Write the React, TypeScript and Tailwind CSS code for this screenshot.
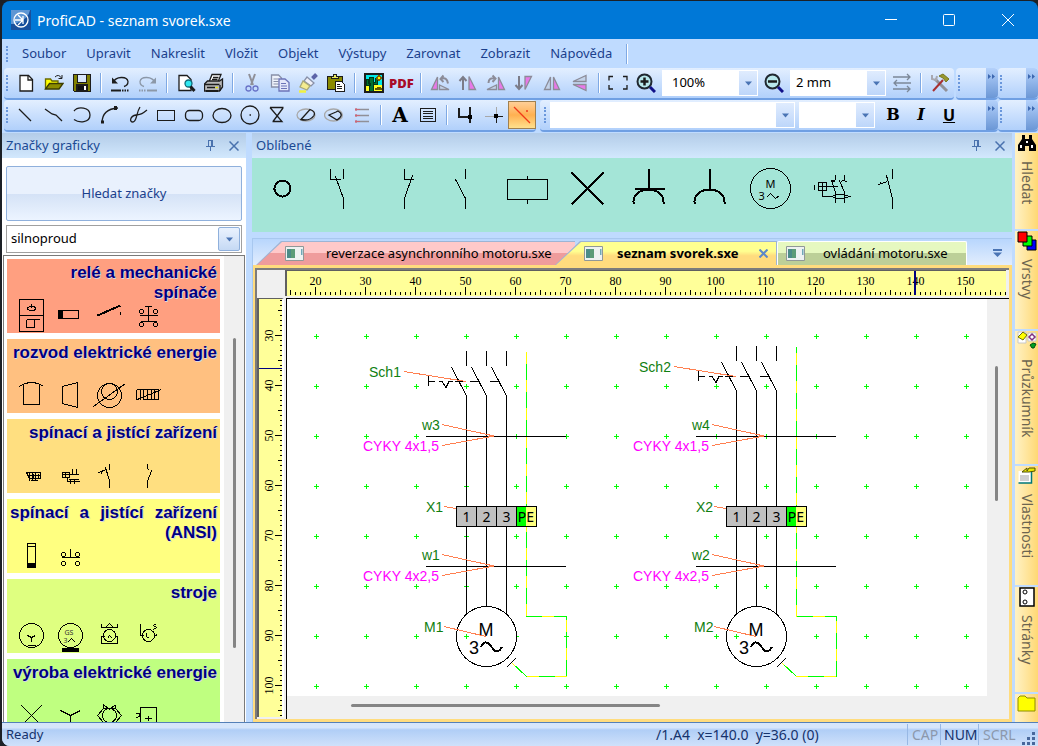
import React, { useState } from 'react';

type IconProps = { children: React.ReactNode; crisp?: boolean };

/** 20x20 drawing used by every toolbar button. */
const Glyph = ({ children, crisp = false }: IconProps) => (
  <svg
    width="20"
    height="20"
    viewBox="0 0 20 20"
    fill="none"
    stroke="#1c1c1c"
    strokeWidth="1.3"
    shapeRendering={crisp ? 'crispEdges' : 'auto'}
    aria-hidden="true"
  >
    {children}
  </svg>
);

const pink = { fill: '#e878e8', stroke: '#8c8c98', strokeWidth: 1.3 };
const grey = { fill: '#c3d3ea', stroke: '#8c8c98', strokeWidth: 1.3 };

const fileIcons = [
  {
    label: 'Nový',
    icon: (
      <Glyph>
        <path d="M4 2.500h8.500l4 4v11.500H4z" fill="#fff" />
        <path d="M12 2.500v4.500h4.500" />
      </Glyph>
    ),
  },
  {
    label: 'Otevřít',
    icon: (
      <Glyph>
        <path d="M1.500 16V6h5l1.500 2h6v3" fill="#ffff00" stroke="#6b6b00" />
        <path d="M1.500 16l4-5.500h13.500l-4 5.500z" fill="#8c8c00" stroke="#3c3c00" />
        <path d="M11 4q3.500-3.500 6.500 1M18 2v3.500h-3.500" strokeWidth="1" />
      </Glyph>
    ),
  },
  {
    label: 'Uložit',
    icon: (
      <Glyph crisp>
        <path d="M1.500 1.500h17v17h-16l-1-1z" fill="#808000" />
        <path d="M5.500 1.500h9v8h-9z" fill="#d8e6fb" />
        <path d="M5 12h10v6H5z" fill="#101010" />
        <path d="M12 13h2v4h-2z" fill="#fff" stroke="none" />
      </Glyph>
    ),
  },
];

const undoIcons = [
  {
    label: 'Zpět',
    icon: (
      <Glyph>
        <path d="M3 9.500C6 3 17 3 18 8.500c0 3-2 4.500-4 5" />
        <path d="M2 4.500v6h6z" fill="#1c1c1c" stroke="none" />
        <path d="M1 17.500h10" strokeWidth="2" />
        <path d="M12 17.500h7" strokeWidth="2" strokeDasharray="1.5 1" />
      </Glyph>
    ),
  },
  {
    label: 'Znovu',
    icon: (
      <Glyph>
        <g stroke="#8c98a8">
          <path d="M17 9.500C14 3 3 3 2 8.500c0 3 2 4.500 4 5" />
          <path d="M18 4.500v6h-6z" fill="#8c98a8" stroke="none" />
          <path d="M9 17.500h10" strokeWidth="2" />
          <path d="M1 17.500h7" strokeWidth="2" strokeDasharray="1.5 1" />
        </g>
      </Glyph>
    ),
  },
];

const printIcons = [
  {
    label: 'Náhled',
    icon: (
      <Glyph>
        <path d="M3 2.500h8l4 4v11H3z" fill="#fff" />
        <circle cx="12.500" cy="10.500" r="3.500" fill="#30e8f0" stroke="#106878" />
        <path d="M14.500 13.500l4 4.500" strokeWidth="3" />
      </Glyph>
    ),
  },
  {
    label: 'Tisk',
    icon: (
      <Glyph>
        <path d="M5 9l3-7.500h9L14 9" fill="#fff" />
        <path d="M0.500 11l3-3h12l3-2v8l-3 4h-15z" fill="#b8b8b8" />
        <path d="M0.500 11.500h15M16 12v6M3 14.500h8M9 4.500h5.500M8 6.500h5.500" />
        <path d="M2 18h12" strokeWidth="2" />
        <path d="M11.500 14.500h2.500" stroke="#e8e800" />
      </Glyph>
    ),
  },
];

const clipboardIcons = [
  {
    label: 'Vyjmout',
    icon: (
      <Glyph>
        <path d="M7 1l4 11M13 1L9 12" stroke="#909098" strokeWidth="2" />
        <circle cx="6.500" cy="15.500" r="2.500" stroke="#6a74c8" />
        <circle cx="13.500" cy="15.500" r="2.500" stroke="#6a74c8" />
      </Glyph>
    ),
  },
  {
    label: 'Kopírovat',
    icon: (
      <Glyph>
        <path d="M1.500 2h7l3 3v9h-10z" fill="#eef2fb" stroke="#8890a8" />
        <path d="M3.500 6h5M3.500 8.500h5M3.500 11h5" stroke="#8890a8" strokeWidth="1" />
        <path d="M9 6h6l4 3.500V18H9z" fill="#e4e8fa" stroke="#6c74b8" />
        <path d="M11 10.500h5M11 13h6M11 15.500h6" stroke="#6c74b8" strokeWidth="1" />
      </Glyph>
    ),
  },
  {
    label: 'Kopírovat formát',
    icon: (
      <Glyph>
        <path d="M14 5l4-4M15 6l4-4" stroke="#5c64a8" strokeWidth="2.5" />
        <path d="M9 4l7 6-3 3-7-5z" fill="#f0f0f8" stroke="#8890a8" />
        <path d="M5 8l7 5-3 4-7-3z" fill="#f4ec90" stroke="#a8a878" />
        <path d="M1 18.500h7" stroke="#f0f040" strokeWidth="2.5" />
      </Glyph>
    ),
  },
  {
    label: 'Vložit',
    icon: (
      <Glyph crisp>
        <path d="M1.500 3.500h15v13h-15z" fill="#8a8a00" />
        <path d="M5.500 5.500h7v-2h-2v-2h-3v2h-2z" fill="#e8e860" />
        <path d="M9.500 8.500h6l3 3v7h-9z" fill="#fff" />
        <path d="M11 11.500h3M11 13.500h5M11 15.500h5" />
      </Glyph>
    ),
  },
];

const exportIcons = [
  {
    label: 'Obrázek',
    icon: (
      <Glyph crisp>
        <path d="M1 1h18v11H1z" fill="#00e8e8" stroke="none" />
        <path d="M1 12h18v7H1z" fill="#ffff20" stroke="none" />
        <path d="M5 4h4v14H5zM2 6h2v4h2v2H2zM9 9h2V5h2v6H9z" fill="#007030" stroke="#003818" strokeWidth="1" />
        <circle cx="15" cy="5" r="2" fill="#ffff00" stroke="#806000" />
        <path d="M11 16l4-2 3 2z" fill="#b0a000" stroke="#605800" />
        <path d="M1 1h18v18H1z" strokeWidth="2" />
      </Glyph>
    ),
  },
  {
    label: 'PDF',
    icon: (
      <svg width="26" height="20" viewBox="0 0 26 20" aria-hidden="true">
        <text x="0" y="15" className="fill-[#a80c28] font-['Open_Sans',sans-serif] text-[13px] font-extrabold">
          PDF
        </text>
      </svg>
    ),
  },
];

const flipIcons = [
  {
    label: 'Otočit vlevo',
    icon: (
      <Glyph>
        <path d="M1.500 16.500L7.500 4v12.500z" {...pink} />
        <path d="M9.500 16.500H19L9.500 12z" {...grey} />
        <path d="M11 6q6-2.500 7 4.500M13.500 2.500l-3 3.500 3 3" stroke="#8c8c98" strokeWidth="2" />
      </Glyph>
    ),
  },
  {
    label: 'Otočit nahoru',
    icon: (
      <Glyph>
        <path d="M5 17V5M1.500 8L5 4 8.500 8" stroke="#7c7c88" strokeWidth="2" />
        <path d="M11 16.500V3.500l6.500 13z" {...pink} />
      </Glyph>
    ),
  },
  {
    label: 'Otočit vpravo',
    icon: (
      <Glyph>
        <path d="M12.500 16.500V4l6 12.500z" {...pink} />
        <path d="M10.500 16.500H1l9.500-4.500z" {...grey} />
        <path d="M2.500 10q0-6 7-4.500M6.500 2.500l3 3-3 3.500" stroke="#8c8c98" strokeWidth="2" />
      </Glyph>
    ),
  },
  {
    label: 'Otočit dolů',
    icon: (
      <Glyph>
        <path d="M5 3v12M1.500 12L5 16 8.500 12" stroke="#7c7c88" strokeWidth="2" />
        <path d="M11 3.500v13l6.500-13z" {...pink} />
      </Glyph>
    ),
  },
  {
    label: 'Zrcadlit vodorovně',
    icon: (
      <Glyph>
        <path d="M8.500 16.500V4l-6 12.500z" {...grey} />
        <path d="M11.500 16.500V4l6 12.500z" {...pink} />
      </Glyph>
    ),
  },
  {
    label: 'Zrcadlit svisle',
    icon: (
      <Glyph>
        <path d="M16 8.500v-6l-13 6z" {...grey} />
        <path d="M16 11.500v6l-13-6z" {...pink} />
      </Glyph>
    ),
  },
];

const Lens = ({ plus }: { plus: boolean }) => (
  <Glyph>
    <circle cx="8.500" cy="8.500" r="7" fill="#b8e8ec" stroke="#202830" strokeWidth="2" />
    <path d={plus ? 'M8.500 4.500v8M4.500 8.500h8' : 'M4 8.500h9'} strokeWidth="2.500" />
    <path d="M14 14l5 5" stroke="#101088" strokeWidth="3" />
  </Glyph>
);

const drawIcons = [
  { label: 'Čára', icon: <Glyph><path d="M3 4l12 12" /></Glyph> },
  { label: 'Lomená čára', icon: <Glyph><path d="M1 4l7 5 4 1 6 6" /></Glyph> },
  { label: 'Oblouk', icon: <Glyph><path d="M2 6C6 1 18 2 18 10S7 18 2 14.500" /></Glyph> },
  {
    label: 'Křivka',
    icon: (
      <Glyph>
        <path d="M2 18q0-14 16-15" />
        <path d="M1 17h3M15.500 1v4" strokeWidth="3" />
      </Glyph>
    ),
  },
  {
    label: 'Bézier',
    icon: (
      <Glyph>
        <path d="M12 2C8 8 9 17 5 17s-3-6 3-7 6-1 11-5" />
      </Glyph>
    ),
  },
  { label: 'Obdélník', icon: <Glyph crisp><path d="M1.500 5.500h17v10h-17z" /></Glyph> },
  { label: 'Zaoblený obdélník', icon: <Glyph><rect x="1.500" y="5.500" width="17" height="10" rx="4" /></Glyph> },
  { label: 'Elipsa', icon: <Glyph><ellipse cx="10" cy="10.500" rx="9" ry="7" /></Glyph> },
  {
    label: 'Kružnice',
    icon: (
      <Glyph>
        <circle cx="10" cy="10" r="9" />
        <path d="M9.500 10h1.500" />
      </Glyph>
    ),
  },
  { label: 'Polygon', icon: <Glyph><path d="M2 2.500l12 14H4.500M2 2.500h13.500M15 3L5 16.500" /></Glyph> },
  {
    label: 'Výseč',
    icon: (
      <Glyph>
        <ellipse cx="10" cy="10" rx="9" ry="6" stroke="#a8a8a8" />
        <path d="M5 14.500L14 4.500q6 2 4 6-4 6-13 4z" />
      </Glyph>
    ),
  },
  {
    label: 'Segment',
    icon: (
      <Glyph>
        <ellipse cx="9.500" cy="10" rx="9" ry="6" stroke="#a8a8a8" />
        <path d="M14 6q7 4-1 9l-8-5 7-3z" />
      </Glyph>
    ),
  },
  {
    label: 'Seznam',
    icon: (
      <Glyph>
        <path d="M4 4.500h13M4 10.500h13M4 16.500h13" stroke="#909098" />
        <path d="M3 4.500h5M3 10.500h5M3 16.500h5" stroke="#c86878" strokeWidth="1" />
        <path d="M4 3v3M4 9v3M4 15v3" stroke="#c86878" />
      </Glyph>
    ),
  },
];

const textIcons = [
  {
    label: 'Text',
    icon: <span className="font-['DejaVu_Serif',serif] text-[20px] leading-6 font-bold text-black">A</span>,
  },
  {
    label: 'Textové pole',
    icon: (
      <Glyph crisp>
        <path d="M2.500 3.500h15v13h-15z" />
        <path d="M5 6.500h10M5 8.500h10M5 11.500h10M5 13.500h10" />
      </Glyph>
    ),
  },
];

const SectionTitle = ({ title }: { title: string }) => (
  <header className="flex h-[25px] shrink-0 items-center bg-linear-to-b from-[#b3cce8] to-[#d2e8fd] pl-1 text-[13px] text-[#1b4a94]">
    <h2 className="flex-1">{title}</h2>
    <button type="button" aria-label="Připnout" className="flex w-6 justify-center">
      <svg width="11" height="11" viewBox="0 0 11 11" fill="none" stroke="#4a72ae" shapeRendering="crispEdges">
        <path d="M3.500 6V0.500h4V6M1 6.500h9M5.500 7v4M6.500 1v5" />
      </svg>
    </button>
    <button type="button" aria-label="Zavřít" className="flex w-6 justify-center">
      <svg width="10" height="10" viewBox="0 0 10 10" stroke="#4a72ae" strokeWidth="1.500">
        <path d="M0.500 0.500l9 9M9.500 0.500l-9 9" />
      </svg>
    </button>
  </header>
);

const Grip = () => <span className="mr-1 ml-0.5 h-4 w-0 border-l-2 border-dotted border-[#6a97dc]" />;
const Divider = () => <span className="mx-1 h-5 w-0.5 border-l border-[#7fa9e4] bg-white" />;

const Tools = ({ items }: { items: { label: string; icon: React.ReactNode }[] }) => (
  <>
    {items.map((tool) => (
      <button
        key={tool.label}
        type="button"
        aria-label={tool.label}
        className="flex h-7 w-7 shrink-0 items-center justify-center"
      >
        {tool.icon}
      </button>
    ))}
  </>
);

const DownArrow = () => (
  <svg width="7" height="5" viewBox="0 0 7 5" fill="#4a74b4" aria-hidden="true">
    <path d="M0 0.500h7L3.500 4.500z" />
  </svg>
);

type ComboProps = { label: string; options: string[]; className: string };

const Combo = ({ label, options, className }: ComboProps) => (
  <div className={`relative flex h-[26px] shrink-0 bg-white ${className}`}>
    <select aria-label={label} className="w-full appearance-none bg-transparent pl-1.5 text-[13px] text-black">
      {options.map((option) => (
        <option key={option}>{option}</option>
      ))}
    </select>
    <span className="pointer-events-none absolute inset-y-px right-px flex w-[18px] items-center justify-center bg-linear-to-b from-[#e0ecfe] to-[#bdd6fa]">
      <DownArrow />
    </span>
  </div>
);

const Overflow = () => (
  <button
    type="button"
    aria-label="Další tlačítka"
    className="ml-auto flex h-full w-3 shrink-0 justify-center rounded-r-sm bg-linear-to-b from-[#b4d1fb] to-[#6b97d6] pt-1.5"
  >
    <svg width="8" height="5" viewBox="0 0 8 5" fill="#3d68b0">
      <path d="M0 0l3 2.500L0 5zM4 0l3 2.500L4 5z" />
    </svg>
  </button>
);

const bar =
  'flex h-full items-center rounded-sm border-b-2 border-[#6f9fe3] bg-linear-to-b from-[#e3efff] to-[#b1d0fb]';

const menuItems = ['Soubor', 'Upravit', 'Nakreslit', 'Vložit', 'Objekt', 'Výstupy', 'Zarovnat', 'Zobrazit', 'Nápověda'];

const TitleBar = () => (
  <header className="flex h-[38px] shrink-0 items-center rounded-t-lg bg-[#0078d7] pl-[9px] text-white">
    <svg width="20" height="20" viewBox="0 0 20 20" fill="none" stroke="#fff" strokeWidth="1.300">
      <path d="M0 0h20v20H0z" fill="#174f9c" stroke="none" />
      <path d="M0 0h19q-1 9-15 14H0z" fill="#5e96d4" stroke="none" />
      <circle cx="10" cy="10" r="7" />
      <path d="M4 10h8M12 6v8M7 5l5 5-5 5" />
    </svg>
    <h1 className="flex-1 pl-1.5 text-[14px]">ProfiCAD - seznam svorek.sxe</h1>
    <button type="button" aria-label="Minimalizovat" className="flex w-[58px] justify-center">
      <svg width="12" height="12" viewBox="0 0 12 12" stroke="#fff"><path d="M0 5.500h12" /></svg>
    </button>
    <button type="button" aria-label="Maximalizovat" className="flex w-[58px] justify-center">
      <svg width="12" height="12" viewBox="0 0 12 12" fill="none" stroke="#fff">
        <rect x="0.500" y="0.500" width="11" height="11" rx="1" />
      </svg>
    </button>
    <button type="button" aria-label="Zavřít okno" className="flex w-[60px] justify-center">
      <svg width="12" height="12" viewBox="0 0 12 12" stroke="#fff"><path d="M0 0l12 12M12 0L0 12" /></svg>
    </button>
  </header>
);

const MainToolbar = () => (
  <div className="flex h-8 shrink-0 pl-0.5">
    <div className={bar}>
      <Grip />
      <Tools items={fileIcons} />
      <Divider />
      <Tools items={undoIcons} />
      <Divider />
      <Tools items={printIcons} />
      <Divider />
      <Tools items={clipboardIcons} />
      <Divider />
      <Tools items={exportIcons} />
      <Divider />
      <Tools items={flipIcons} />
      <Divider />
      <Tools
        items={[
          {
            label: 'Celá strana',
            icon: <Glyph><path d="M5 3.500H1v4M1 12v4h4M15 3.500h4v4M19 12v4h-4" /></Glyph>,
          },
          { label: 'Zvětšit', icon: <Lens plus /> },
        ]}
      />
      <Combo label="Měřítko" options={['100%', '50%', '200%']} className="mx-0.5 w-24 pl-1" />
      <Tools items={[{ label: 'Zmenšit', icon: <Lens plus={false} /> }]} />
      <Combo label="Rastr" options={['2 mm', '1 mm', '4 mm']} className="mx-0.5 w-24" />
      <Tools
        items={[
          {
            label: 'Zaměnit',
            icon: (
              <Glyph>
                <g stroke="#7c8898">
                  <path d="M1 4h17M15 1l3 3-3 3M19 10H2M5 7l-3 3 3 3M1 16h17M15 13l3 3-3 3" />
                </g>
              </Glyph>
            ),
          },
        ]}
      />
      <Divider />
      <Tools
        items={[
          {
            label: 'Nastavení',
            icon: (
              <Glyph>
                <path d="M5 6l12 12" stroke="#909098" strokeWidth="3" />
                <path d="M2 2v4l4 1 1-4" stroke="#a8a8b0" strokeWidth="2" />
                <path d="M3 18L13 7" stroke="#a83030" strokeWidth="2" />
                <path d="M9 3l4-2 6 5-3 3-3-4z" fill="#989830" stroke="#787820" strokeWidth="1" />
              </Glyph>
            ),
          },
        ]}
      />
    </div>
    <div className={`${bar} ml-0.5 flex-1`}>
      <Grip />
      <Overflow />
    </div>
    <div className={`${bar} w-10 shrink-0`}>
      <Grip />
      <Overflow />
    </div>
  </div>
);

const DrawToolbar = () => (
  <div className="flex h-8 shrink-0 pl-0.5">
    <div className={bar}>
      <Grip />
      <Tools items={drawIcons} />
      <Divider />
      <Tools items={textIcons} />
      <Divider />
      <Tools
        items={[
          {
            label: 'Spoj',
            icon: (
              <Glyph crisp>
                <path d="M3 3v9h12M14 2v16" strokeWidth="2" />
                <path d="M12 10h4v4h-4z" fill="#000" stroke="none" />
              </Glyph>
            ),
          },
          {
            label: 'Křížení',
            icon: (
              <Glyph crisp>
                <path d="M1 11.500h9M12.500 2v7" stroke="#a8a8a8" />
                <path d="M12 11.500h7M12.500 11v7" />
                <path d="M10 9h4v4h-4z" fill="#000" stroke="none" />
              </Glyph>
            ),
          },
        ]}
      />
      <button
        type="button"
        aria-label="Režim spojů"
        aria-pressed="true"
        className="flex h-7 w-7 items-center justify-center border border-[#a08050] bg-linear-to-b from-[#ffcf96] via-[#ffb050] to-[#ffe08c]"
      >
        <Glyph>
          <path d="M2 2l16 16" stroke="#f03818" />
          <path d="M14 6h2" stroke="#f03818" />
        </Glyph>
      </button>
    </div>
    <div className={`${bar} ml-1 flex-1 pl-0.5`}>
      <Grip />
      <Combo label="Písmo" options={['']} className="min-w-0 flex-1 shrink" />
      <Combo label="Velikost" options={['']} className="mx-1 w-[76px]" />
      <div className="flex w-[107px] font-['DejaVu_Serif',serif] text-[16px] font-bold text-black">
        <button type="button" aria-label="Tučné" className="w-7">B</button>
        <button type="button" aria-label="Kurzíva" className="w-7 italic">I</button>
        <button type="button" aria-label="Podtržené" className="w-7 font-['Open_Sans',sans-serif] underline">
          U
        </button>
      </div>
      <Overflow />
    </div>
    <div className={`${bar} w-10 shrink-0`}>
      <Grip />
      <Overflow />
    </div>
  </div>
);

const symbolGroups = [
  {
    title: <>relé a mechanické<br />spínače</>,
    color: 'bg-[#ff9f80]',
    symbols: [
      <g key="a"><path d="M-12-16h24v32h-24zM-12 0h24M0-12v4M-5 4h13M-5 4v8h8V4" /><ellipse cy="-7" rx="4" ry="2" /></g>,
      <g key="b"><path d="M-12-5h20v8h-20z" /><path d="M-12-5h4v8h-4z" fill="#000" /></g>,
      <g key="c"><path d="M-12 0l23-10" strokeWidth="2" /><path d="M11-4v3" /></g>,
      <g key="d">
        <path d="M0-9v14M-4-9h7M-9 0h18M-8 6h16" />
        <circle cx="-7" cy="-4" r="2" /><circle cx="7" cy="-4" r="2" /><circle cx="-7" cy="9" r="2" /><circle cx="7" cy="9" r="2" />
      </g>,
    ],
  },
  {
    title: 'rozvod elektrické energie',
    color: 'bg-[#ffc080]',
    symbols: [
      <path key="a" d="M-8-11v20h16v-20M-12-9q12-8 24 0" />,
      <path key="b" d="M-8-9L7-13v25L-8 8z" />,
      <g key="c"><circle r="12" /><circle cy="-4" r="8" /><path d="M-16 11L16-12" /></g>,
      <g key="d">
        <path d="M-12-6V4M-12-6h22M-11 4l3-2M-5-6V4h15V-6M-8-6V4M-1-6V4M3-6V4M6-6V4" />
        <path d="M-11 4L13-6" />
      </g>,
    ],
  },
  {
    title: 'spínací a jistící zařízení',
    color: 'bg-[#ffdf80]',
    symbols: [
      <path key="a" d="M-5-3h14v6h-11zM-2-3v8M1-3v8M4-3v8M-5 0h14M-1 5h7M7-2v5M2-2v5" />,
      <path key="b" d="M-8-3h7v5h-7zM-8-1h16M2-7v6M6-7v6M-3 2v4h12M0 3v5M4 3v5M-5-4v6M-2 4h10" />,
      <path key="c" d="M0-12v6M0 12V5L-4-8M-11-3l8-3M-8-5v3" />,
      <path key="d" d="M-1-12v5l2 2M3-5L-1 6v6" />,
    ],
  },
  {
    title: 'spínací a jistící zařízení (ANSI)',
    color: 'bg-[#ffff80]',
    symbols: [
      <g key="a"><path d="M-4-12h8v24h-8zM-4-9h8" /><path d="M-4 8h8v4h-8z" fill="#000" /></g>,
      <g key="b">
        <path d="M0-7v9M-9 2h18" />
        <circle cx="-7" cy="-1" r="2" /><circle cx="7" cy="-1" r="2" /><circle cx="-7" cy="8" r="2" /><circle cx="7" cy="8" r="2" />
      </g>,
    ],
  },
  {
    title: 'stroje',
    color: 'bg-[#dfff80]',
    symbols: [
      <g key="a"><circle r="12" /><path d="M0 6V2l-4-2M0 2l4-2M-4 10h8" /></g>,
      <g key="b">
        <circle r="12" /><path d="M-8 13h16v3H-8z" fill="#000" /><path d="M-3 7l4-4 4 4" />
        <text x="-6" y="-1" className="text-[7px]" fill="#333" stroke="none">GS</text>
        <text x="-7" y="7" className="text-[7px]" fill="#333" stroke="none">3</text>
      </g>,
      <g key="c"><circle r="6" /><path d="M-8-12v4h16v-4M-8 8h16V1H5M-8 8V1h3M-4-8l4-4 4 4M-2 3l2-3 3 3" /></g>,
      <g key="d"><circle r="6" /><path d="M-8-12V0h3M8-2V0H5M8-12l-3 2 3 2-3 2M-2-3v4l3 2" /></g>,
    ],
  },
  {
    title: 'výroba elektrické energie',
    color: 'bg-[#bfff80]',
    symbols: [
      <path key="a" d="M-10-10l20 20M10-10l-20 20" />,
      <path key="b" d="M-10-5L0 0l10-5M0 0v12" />,
      <g key="c"><path d="M-6-11v4h12v-4M-6-7L-12 0l6 7h12l6-7-6-7M-6-11L0-6l6-5" /><circle r="7" /></g>,
      <g key="d"><path d="M-8-8h16V12H-8zM-4 3h7M0 0v5M-13-2h4v3l-3 1" /></g>,
    ],
  },
];

const SymbolPanel = () => (
  <aside className="flex w-[244px] shrink-0 flex-col bg-white">
    <SectionTitle title="Značky graficky" />
    <button
      type="button"
      className="mx-1 mt-2 h-[55px] shrink-0 rounded-xs border border-[#8fb0dc] bg-linear-to-b from-[#e9f1fd] from-50% via-[#d4e2f6] via-50% to-[#ecf4ff] text-[13px] text-[#1b3f8c]"
    >
      Hledat značky
    </button>
    <div className="relative mx-1 mt-1 flex h-7 shrink-0 border border-[#a0a0a0]">
      <select aria-label="Skupina značek" className="w-full appearance-none pl-1 text-[13px] text-black">
        <option>silnoproud</option>
        <option>slaboproud</option>
      </select>
      <span className="pointer-events-none absolute inset-y-px right-px flex w-[22px] items-center justify-center rounded-xs border border-[#8fb0dc] bg-linear-to-b from-[#eaf2fe] to-[#c5d9f4]">
        <DownArrow />
      </span>
    </div>
    <div className="mx-px mt-0.5 flex min-h-0 flex-1 overflow-hidden border border-b-0 border-[#7a7a7a]">
      <ul className="flex flex-1 flex-col gap-1.5 py-[3px] pr-1 pl-[3px]">
        {symbolGroups.map((group, i) => (
          <li key={i} className={`flex h-[74px] shrink-0 flex-col px-[3px] pt-1 ${group.color}`}>
            <h3 className="h-[34px] text-justify font-['Liberation_Sans',sans-serif] text-[17px] leading-5 font-bold text-[#000080] [text-align-last:right] [text-shadow:1px_1px_0_#d8d8e4]">
              {group.title}
            </h3>
            <div className="flex pl-0.5">
              {group.symbols.map((symbol, n) => (
                <svg
                  key={n}
                  width="39"
                  height="36"
                  viewBox="-19.5 -18.5 39 36"
                  fill="none"
                  stroke="#000"
                  shapeRendering="crispEdges"
                >
                  {symbol}
                </svg>
              ))}
            </div>
          </li>
        ))}
      </ul>
      <div className="flex w-5 justify-center bg-[#f0f0f0] pt-[82px]">
        <span className="h-[310px] w-[3px] rounded-full bg-[#858585]" />
      </div>
    </div>
  </aside>
);

const favourites = [
  <g key="0" strokeWidth="2"><circle r="8" /><path d="M-10 0h2" /></g>,
  <path key="1" d="M-13-20v11h10M0-20v10M-8-12L0 10v10" />,
  <path key="2" d="M0-20v11h9M8-13L0 10v10" />,
  <path key="3" d="M0-20v10M-10-9L0 10v10" />,
  <path key="4" d="M-19-9h40v20h-40zM1-13v4M1 11v4" />,
  <path key="5" d="M-16-16l32 32M16-16l-32 32" strokeWidth="2" />,
  <path key="6" d="M0-20V2M-14 0h30M-15 15v-2a15 12 0 0 1 30 0v2" strokeWidth="2" />,
  <path key="7" d="M0-20V2M-15 15v-2a15 12 0 0 1 30 0v2" strokeWidth="2" />,
  <g key="8">
    <circle r="20" />
    <text x="-5" y="-1" className="text-[11px]" fill="#000" stroke="none">M</text>
    <text x="-12" y="11" className="text-[11px]" fill="#000" stroke="none">3</text>
    <path d="M-4 9l4-4 5 5 4-3" />
  </g>,
  <g key="9">
    <path d="M-13-6h8v8h-8zM-9-6v14h9M-13-2H6M-17-4v5M0 8q8-4 18 0-10 4-18 0" />
    <path d="M4-14v5l-3 2M13-14v5l-3 2M0-8l4 12v10M8-8l5 12v10M13-8l3 2M1-8l3 2" />
  </g>,
  <path key="10" d="M0-20v10M-6-13L0 10v10M-14-4l9-3M-12-6l2 2" />,
];

const Favourites = () => (
  <section aria-label="Oblíbené">
    <SectionTitle title="Oblíbené" />
    <div className="flex h-[74px] overflow-hidden bg-[#a4e5d7]">
      {favourites.map((symbol, i) => (
        <svg
          key={i}
          className="shrink-0"
          width="61"
          height="74"
          viewBox="-30.5 -30.5 61 74"
          fill="none"
          stroke="#000"
          shapeRendering="crispEdges"
        >
          {symbol}
        </svg>
      ))}
    </div>
  </section>
);

const DocIcon = () => (
  <svg width="19" height="15" viewBox="0 0 19 15" className="shrink-0">
    <path d="M0.500 0.500h18v14h-18z" fill="#eef2f2" stroke="#909898" />
    <path d="M2 3h8v9H2z" fill="#4c8c88" />
    <path d="M6 3h4v9H6z" fill="#5c9c78" />
    <path d="M16 3h1.500v6H16z" fill="#70a8b8" />
  </svg>
);

const slant = '[clip-path:polygon(25px_0,100%_0,100%_100%,0_100%)]';

const DocumentTabs = () => (
  <nav className="mt-1.5 flex h-[27px] border-t border-l border-[#a8c8f0] bg-linear-to-b from-[#b8d6fd] to-[#e2edfd] pt-0.5 pl-[3px] text-[13px] text-black">
    <button type="button" className={`-mr-5 flex w-[319px] bg-[#9db4d4] pt-px pl-px ${slant}`}>
      <span className={`flex h-full flex-1 items-center bg-linear-to-b from-[#ffc9c9] from-50% to-[#ef9c9c] to-50% pl-7 ${slant}`}>
        <DocIcon />
        <span className="pl-[22px]">reverzace asynchronního motoru.sxe</span>
      </span>
    </button>
    <div className={`flex w-[222px] bg-[#9db4d4] pt-px pr-px pl-px ${slant}`}>
      <div className={`flex h-full flex-1 items-center bg-linear-to-b from-[#ffff90] from-40% to-[#ffdc7e] to-60% pl-7 ${slant}`}>
        <DocIcon />
        <button type="button" className="pl-3.5 font-bold">seznam svorek.sxe</button>
        <button type="button" aria-label="Zavřít kartu" className="ml-auto pr-2">
          <svg width="9" height="9" viewBox="0 0 9 9" stroke="#5c88c8" strokeWidth="2">
            <path d="M0.500 0.500l8 8M8.500 0.500l-8 8" />
          </svg>
        </button>
      </div>
    </div>
    <button
      type="button"
      className="flex w-[190px] items-center rounded-t-xs border border-b-0 border-white bg-linear-to-b from-[#e6f8c0] from-50% to-[#bccf98] to-50% pl-2"
    >
      <DocIcon />
      <span className="pl-[18px]">ovládání motoru.sxe</span>
    </button>
    <button type="button" aria-label="Seznam oken" className="ml-auto pr-2.5">
      <svg width="9" height="9" viewBox="0 0 9 9" fill="#4a74b4">
        <path d="M0 0h9v2H0zM0 3.500h9L4.500 8z" />
      </svg>
    </button>
  </nav>
);

const rulerUnits = Array.from({ length: 200 }, (_, u) => u);
const tickLength = (u: number) => (u % 10 === 0 ? 8 : u % 5 === 0 ? 5 : 3);

const HorizontalRuler = () => (
  <svg className="block h-full w-full" shapeRendering="crispEdges" stroke="#000">
    {rulerUnits.slice(15).map((u) => {
      const x = (u - 20) * 5 + 28.5;
      return (
        <g key={u}>
          <path d={`M${x} ${24 - tickLength(u)}V24`} />
          {u % 10 === 0 && (
            <text x={x} y="14" textAnchor="middle" stroke="none" className="font-['Liberation_Serif',serif] text-[12px]">
              {u}
            </text>
          )}
        </g>
      );
    })}
    <path d="M628 0v24" stroke="#000080" strokeWidth="2" />
  </svg>
);

const VerticalRuler = () => (
  <svg className="block h-full w-full" shapeRendering="crispEdges" stroke="#000">
    {rulerUnits.slice(23).map((u) => {
      const y = (u - 30) * 5 + 36.5;
      return (
        <g key={u}>
          <path d={`M${24 - tickLength(u)} ${y}H24`} />
          {u % 10 === 0 && (
            <text
              transform={`translate(14 ${y}) rotate(-90)`}
              textAnchor="middle"
              stroke="none"
              className="font-['Liberation_Serif',serif] text-[12px]"
            >
              {u}
            </text>
          )}
        </g>
      );
    })}
    <path d="M0 69.500h24" stroke="#000080" />
  </svg>
);

type CircuitProps = { x: number; y: number; n: number; upper: string; lower: string; lift: number };

/** One motor branch, its origin is where the first phase enters the terminal block. */
const Circuit = ({ x, y, n, upper, lower, lift }: CircuitProps) => {
  const earthWire = `M60.500 ${-154 - lift}V110.500h40v60h-40l-15-14`;

  return (
    <g transform={`translate(${x} ${y})`} stroke="#000" fill="none">
      <g transform={`translate(0 ${-lift})`}>
        {[0, 20, 40].map((px) => (
          <path key={px} d={`M${px + 0.5}-155v15M${px - 14.5}-139L${px + 0.5}-110V${lift}`} />
        ))}
        <path d="M-37.500-130v10M-37-124.500h6M-27-124.500h3l4 6 3-6h4M-11-124.500h9M4-124.500h10M24-124.500h8" />
        <path d="M-62-134.500L0-124.500" stroke="#ff7f50" />
        <text x="-97" y="-129" fill="#108010" stroke="none">Sch{n}</text>
      </g>

      <path d={earthWire} stroke="#ffff00" />
      <path d={earthWire} stroke="#00ff00" strokeDasharray="16 12" strokeDashoffset={lift ? 10 : 16} />

      {[0, 20, 40].map((px) => (
        <path key={px} d={`M${px + 0.5}-110V0M${px + 0.5} 20V${px === 20 ? 100 : 108}`} />
      ))}
      <path d="M-40-69.500H100M-40 60.500H100" />
      <path d="M-24-81.500L28-70-24-60.500M-24 48.500L28 60-24 69.500M-22 0.500l12 2" stroke="#ff7f50" />

      {[0, 1, 2].map((cell) => (
        <g key={cell}>
          <rect x={cell * 20 - 9.5} y="0.5" width="20" height="20" fill="#c0c0c0" />
          <text x={cell * 20 + 0.5} y="16" textAnchor="middle" fill="#000" stroke="none" className="font-['Noto_Sans',sans-serif]">
            {cell + 1}
          </text>
        </g>
      ))}
      <path d="M50 0h10v20H50z" fill="#00ff00" stroke="none" />
      <path d="M60 0h10v20H60z" fill="#ffff80" stroke="none" />
      <path d="M50.500 0.500h20v20h-20z" />
      <text x="60" y="16" textAnchor="middle" fill="#000" stroke="none" className="font-['Noto_Sans',sans-serif]">PE</text>

      <circle cx="20.500" cy="130.500" r="30" fill="#fff" />
      <path d="M-2 130.500h5M0.500 128v5" stroke="#00ff00" />
      <path d="M41 161l9-9" />
      <g fill="#000" stroke="none" className="text-[18px]">
        <text x="20" y="130" textAnchor="middle">M</text>
        <text x="3" y="148">3</text>
      </g>
      <path d="M15 141q4-8 9-2l4 5q4 4 8-3" strokeWidth="2" />
      <path d="M-22 120.500l42 10" stroke="#ff7f50" />

      <g fill="#108010" stroke="none">
        <text x="-44" y="-76">{upper}</text>
        <text x="-40" y="6">X{n}</text>
        <text x="-44" y="54">{lower}</text>
        <text x="-42" y="126">M{n}</text>
      </g>
      <g fill="#ff00ff" stroke="none">
        <text x="-103" y="-55">CYKY 4x1,5</text>
        <text x="-103" y="75">CYKY 4x2,5</text>
      </g>
    </g>
  );
};

const Sheet = () => (
  <svg
    className="block h-full w-full bg-white font-['Liberation_Sans',sans-serif] text-[14px]"
    shapeRendering="crispEdges"
    role="img"
    aria-label="Schéma zapojení motorů"
  >
    <defs>
      <pattern id="grid" x="4" y="12" width="50" height="50" patternUnits="userSpaceOnUse">
        <path d="M23 25.500h5M25.500 23v5" stroke="#00ff00" />
      </pattern>
    </defs>
    <rect width="100%" height="100%" fill="url(#grid)" />
    <Circuit x={179} y={207} n={1} upper="w3" lower="w1" lift={0} />
    <Circuit x={449} y={207} n={2} upper="w4" lower="w2" lift={5} />
  </svg>
);

const DocumentView = () => (
  <div className="flex min-h-0 flex-1 border-l border-[#a8c8f0] bg-[#ffdc7e] p-[3px] pl-0.5">
    <div className="grid min-w-0 flex-1 grid-cols-[28px_1fr] grid-rows-[28px_1fr] border-t-2 border-l-2 border-[#7c7c7c] bg-[#f0f0f0]">
      <div />
      <div className="mr-[3px] mb-0.5 min-w-0 overflow-hidden border-t border-l-2 border-[#606060] bg-[#ffff99]">
        <HorizontalRuler />
      </div>
      <div className="mr-px mb-0.5 min-h-0 overflow-hidden border-t border-r-2 border-l-2 border-[#606060] border-r-white bg-[#ffff99]">
        <VerticalRuler />
      </div>
      <div className="ml-px grid min-h-0 min-w-0 grid-cols-[1fr_22px] grid-rows-[1fr_23px] border-t border-l border-black">
        <div className="min-h-0 min-w-0 overflow-hidden">
          <Sheet />
        </div>
        <div className="flex pt-[67px] pl-2">
          <span className="h-[135px] w-[3px] rounded-full bg-[#858585]" />
        </div>
        <div className="flex items-start pt-2 pl-16">
          <span className="h-[3px] w-[309px] rounded-full bg-[#858585]" />
        </div>
      </div>
    </div>
  </div>
);

const dockTabs = [
  {
    label: 'Hledat',
    size: 'h-24',
    icon: (
      <g fill="#000">
        <path d="M5 2h3v4h4V2h3v4l4 6v6h-7v-5H8v5H1v-6l4-6z" />
        <path d="M3 12h2v3H3zM14 12h2v3h-2zM9 8h2v2H9z" fill="#fff" />
      </g>
    ),
  },
  {
    label: 'Vrstvy',
    size: 'h-[98px]',
    icon: (
      <g stroke="#000">
        <path d="M10 9h9v10h-9z" fill="#0000ff" />
        <path d="M6 5h9v10H6z" fill="#00ff00" />
        <path d="M1 1h9v10H1z" fill="#ff0000" />
      </g>
    ),
  },
  {
    label: 'Průzkumník',
    size: 'h-[133px]',
    icon: (
      <g>
        <path d="M1 1h8v11H1zM11 2h8v8h-8z" fill="#fff" stroke="#c8c8c8" />
        <path d="M1 6l5-5 4 3-4 5z" fill="#ffff00" stroke="#707000" />
        <path d="M15 3l3 3-3 3-3-3z" fill="#fff" stroke="#803080" strokeWidth="1.5" />
        <path d="M13 14l3-2 3 1-2 4h-2z" fill="#00a020" stroke="#005010" />
      </g>
    ),
  },
  {
    label: 'Vlastnosti',
    size: 'h-[119px]',
    icon: (
      <g>
        <path d="M1.500 5h13v12h-13z" fill="#fff" />
        <path d="M14.500 5v12h-13" fill="none" stroke="#007878" strokeWidth="1.5" />
        <path d="M3 10h9M3 12h9M3 14h9" stroke="#a0a0a0" />
        <path d="M5 6l5-4v3l2-3h6v3l-6 1z" fill="#e8e800" stroke="#505000" />
      </g>
    ),
  },
  {
    label: 'Stránky',
    size: 'h-[105px]',
    icon: (
      <g stroke="#000" fill="none">
        <path d="M3 1h14v18H3z" fill="#fff" strokeWidth="1.5" />
        <circle cx="8" cy="5" r="2" /><circle cx="8" cy="15" r="2" />
      </g>
    ),
  },
  {
    label: '',
    size: 'h-7',
    icon: <path d="M1 17V4l2-2h5l2 2h8v13z" fill="#ffff00" stroke="#8c8c00" />,
  },
];

const DockBar = () => (
  <aside className="ml-[3px] flex w-[23px] shrink-0 flex-col gap-0.5">
    {dockTabs.map((tab) => (
      <button
        key={tab.label}
        type="button"
        aria-label={tab.label || 'Dokumenty'}
        className={`flex flex-col items-center bg-linear-to-r from-[#fff2c4] to-[#ffd872] text-[14px] text-[#6c6450] ${tab.size}`}
      >
        <svg width="20" height="20" viewBox="0 0 20 20" className="shrink-0" aria-hidden="true">
          {tab.icon}
        </svg>
        <span className="pt-2 leading-5 [writing-mode:vertical-rl]">{tab.label}</span>
      </button>
    ))}
  </aside>
);

const StatusBar = () => (
  <footer className="flex h-6 shrink-0 items-center rounded-bl-lg border-t border-[#5480b8] bg-linear-to-b from-[#d6e6fb] from-20% via-[#b0cef6] via-30% to-[#cfe1fa] text-[14px] text-[#15326c]">
    <span className="flex-1 pl-1 text-[13px]">Ready</span>
    <span className="w-[251px] whitespace-pre">/1.A4  x=140.0  y=36.0 (0)</span>
    <span className="w-[33px] border-l border-[#98b8e4] pl-1 text-[#8c98ac]">CAP</span>
    <span className="w-[38px] border-l border-[#98b8e4] pl-[3px]">NUM</span>
    <span className="w-10 border-l border-[#98b8e4] pl-1 text-[#8c98ac]">SCRL</span>
    <svg width="20" height="23" viewBox="0 0 20 23" fill="#48689c">
      <path d="M14 9h3v3h-3zM9 14h3v3H9zM14 14h3v3h-3zM4 19h3v3H4zM9 19h3v3H9zM14 19h3v3h-3z" />
    </svg>
  </footer>
);

const App = () => {
  const [openMenu, setOpenMenu] = useState('');

  return (
    <div className="flex h-screen flex-col overflow-hidden bg-[#1c2026] pt-px pl-0.5 font-['Noto_Sans','Open_Sans',sans-serif] select-none">
      <TitleBar />
      <div className="flex min-h-0 flex-1 flex-col rounded-bl-lg bg-[#bfdbff]">
        <nav className="flex h-[29px] shrink-0 items-center pl-0.5 text-[13px] text-[#1b3f8c]">
          <Grip />
          {menuItems.map((item) => (
            <button
              key={item}
              type="button"
              aria-expanded={openMenu === item}
              onClick={() => setOpenMenu(openMenu === item ? '' : item)}
              className="px-2.5"
            >
              {item}
            </button>
          ))}
          <Divider />
        </nav>
        <MainToolbar />
        <DrawToolbar />
        <div className="flex min-h-0 flex-1 pt-px">
          <SymbolPanel />
          <main className="ml-1.5 flex min-w-0 flex-1 flex-col">
            <Favourites />
            <DocumentTabs />
            <DocumentView />
          </main>
          <DockBar />
        </div>
        <StatusBar />
      </div>
    </div>
  );
};

export default App;
